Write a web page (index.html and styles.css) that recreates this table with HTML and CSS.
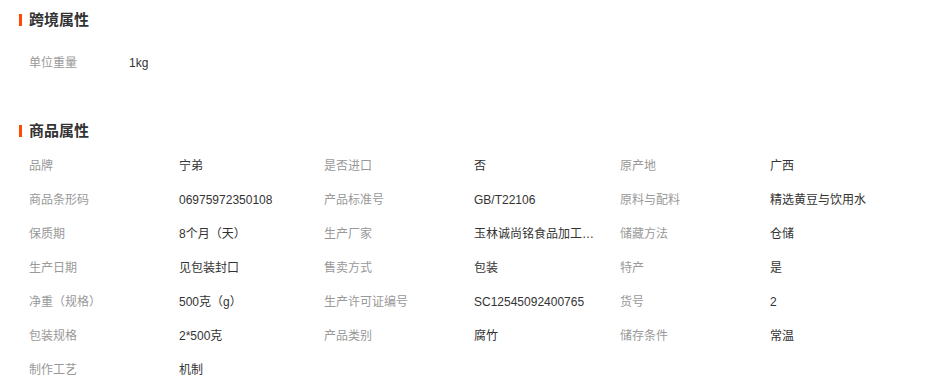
FILE: index.html
```html
<!DOCTYPE html>
<html lang="zh-CN">
<head>
<meta charset="utf-8">
<link rel="stylesheet" href="styles.css">
</head>
<body>
<div class="page">
  <section class="sec sec-cross">
    <h2 class="sec-title"><span class="bar"></span>跨境属性</h2>
    <div class="cross-row">
      <span class="lbl lbl-short">单位重量</span>
      <span class="val">1kg</span>
    </div>
  </section>
  <section class="sec sec-goods">
    <h2 class="sec-title"><span class="bar"></span>商品属性</h2>
    <div class="grid">
      <span class="lbl">品牌</span><span class="val">宁弟</span>
      <span class="lbl">是否进口</span><span class="val">否</span>
      <span class="lbl">原产地</span><span class="val">广西</span>

      <span class="lbl">商品条形码</span><span class="val">06975972350108</span>
      <span class="lbl">产品标准号</span><span class="val">GB/T22106</span>
      <span class="lbl">原料与配料</span><span class="val">精选黄豆与饮用水</span>

      <span class="lbl">保质期</span><span class="val">8个月（天）</span>
      <span class="lbl">生产厂家</span><span class="val" title="玉林诚尚铭食品加工有限公司">玉林诚尚铭食品加工有限公司</span>
      <span class="lbl">储藏方法</span><span class="val">仓储</span>

      <span class="lbl">生产日期</span><span class="val">见包装封口</span>
      <span class="lbl">售卖方式</span><span class="val">包装</span>
      <span class="lbl">特产</span><span class="val">是</span>

      <span class="lbl">净重（规格）</span><span class="val">500克（g）</span>
      <span class="lbl">生产许可证编号</span><span class="val">SC12545092400765</span>
      <span class="lbl">货号</span><span class="val">2</span>

      <span class="lbl">包装规格</span><span class="val">2*500克</span>
      <span class="lbl">产品类别</span><span class="val">腐竹</span>
      <span class="lbl">储存条件</span><span class="val">常温</span>

      <span class="lbl">制作工艺</span><span class="val">机制</span>
    </div>
  </section>
</div>
</body>
</html>
```

FILE: styles.css
```css
html, body {
  margin: 0;
  padding: 0;
  background: #fff;
}
body {
  font-family: "Liberation Sans", "Noto Sans CJK SC", sans-serif;
  font-size: 12px;
  color: #333;
}
.page {
  padding: 10px 0 0 19px;
}
.sec-title {
  display: flex;
  align-items: center;
  margin: 0;
  height: 20px;
  line-height: 20px;
  font-size: 15px;
  font-weight: bold;
  color: #333;
}
.bar {
  display: inline-block;
  width: 3px;
  height: 12px;
  background: #ff4a00;
  margin-right: 7px;
}
.cross-row {
  display: flex;
  height: 34px;
  line-height: 34px;
  margin-top: 16px;
  padding-left: 10px;
}
.lbl {
  color: #999;
  white-space: nowrap;
}
.lbl-short {
  width: 100px;
}
.val {
  color: #333;
  white-space: nowrap;
  overflow: hidden;
  text-overflow: ellipsis;
  max-width: 125px;
}
.sec-goods {
  margin-top: 41px;
}
.grid {
  display: grid;
  grid-template-columns: 150px 145px 150px 146px 150px 1fr;
  grid-auto-rows: 34px;
  line-height: 34px;
  margin-top: 8px;
  padding-left: 10px;
}
```
